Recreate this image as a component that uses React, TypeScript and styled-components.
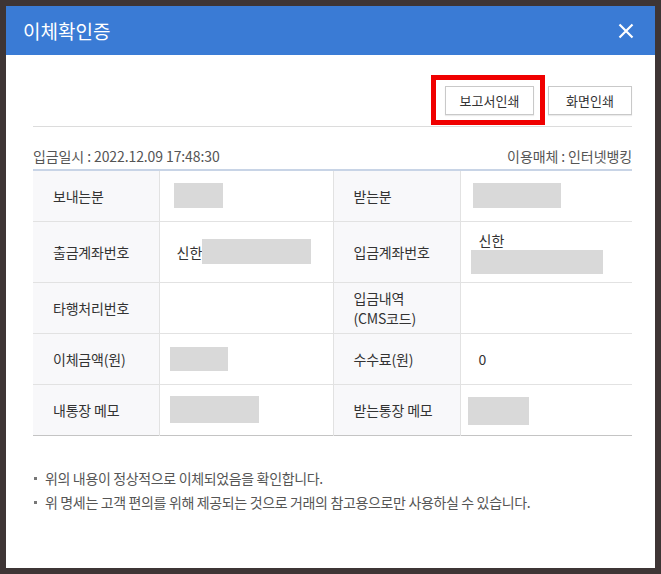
import React from "react";
import styled, { createGlobalStyle } from "styled-components";

const Global = createGlobalStyle`
  html, body { margin: 0; padding: 0; }
  body {
    background: #3e3535;
    font-family: "Noto Sans CJK KR", "Noto Sans", sans-serif;
    width: 661px;
    height: 574px;
    overflow: hidden;
  }
  * { box-sizing: border-box; }
`;

const Frame = styled.div`
  padding: 6px;
  width: 661px;
  height: 574px;
`;

const Modal = styled.div`
  width: 649px;
  height: 562px;
  background: #fff;
  display: flex;
  flex-direction: column;
`;

const Header = styled.div`
  height: 49px;
  background: #3a7bd5;
  display: flex;
  align-items: center;
  justify-content: space-between;
  padding: 0 20px 0 17px;
`;

const Title = styled.h1`
  margin: 0;
  font-size: 19px;
  font-weight: 400;
  color: #fff;
`;

const CloseBtn = styled.button`
  border: 0;
  background: none;
  padding: 0;
  width: 18px;
  height: 18px;
  display: flex;
  align-items: center;
  justify-content: center;
  cursor: pointer;
`;

const Body = styled.div`
  padding: 31px 23px 0 27px;
  display: flex;
  flex-direction: column;
`;

const Toolbar = styled.div`
  display: flex;
  justify-content: flex-end;
  gap: 14px;
  padding-bottom: 11px;
  border-bottom: 1px solid #dcdcdc;
`;

const Highlight = styled.div`
  position: relative;
  display: flex;
`;

const RedBox = styled.span`
  position: absolute;
  left: -14px;
  right: -11px;
  top: -11px;
  bottom: -10px;
  border: 5px solid #f00000;
  pointer-events: none;
`;

const PrintButton = styled.button<{ $w: number }>`
  width: ${(p) => p.$w}px;
  height: 29px;
  border: 1px solid #c9c9c9;
  background: #fff;
  font-family: inherit;
  font-size: 13px;
  color: #333;
  padding: 0;
  box-shadow: 0 1px 1px rgba(0, 0, 0, 0.08);
`;

const InfoLine = styled.div`
  display: flex;
  justify-content: space-between;
  align-items: center;
  margin-top: 18px;
  height: 22px;
  font-size: 14px;
  color: #555;
  letter-spacing: -0.1px;
`;

const Table = styled.table`
  margin-top: 2px;
  width: 599px;
  border-collapse: collapse;
  table-layout: fixed;
  border-top: 2px solid #c8d4e6;
  border-bottom: 1px solid #c4c4c4;
`;

const Row = styled.tr<{ $h?: number }>`
  height: ${(p) => p.$h ?? 51}px;
  border-bottom: 1px solid #e2e2e2;
  &:last-child { border-bottom: 0; }
`;

const Label = styled.th`
  background: #f8f8fa;
  text-align: left;
  font-weight: 400;
  font-size: 14px;
  color: #333;
  padding: 0 10px 0 20px;
  border-right: 1px solid #e2e2e2;
  line-height: 20px;
  letter-spacing: -0.2px;
`;

const Value = styled.td<{ $pad?: number; $top?: boolean }>`
  font-size: 14px;
  color: #333;
  padding: ${(p) => (p.$top ? "6px" : "0")} 8px 0 ${(p) => p.$pad ?? 10}px;
  border-right: 1px solid #e2e2e2;
  vertical-align: ${(p) => (p.$top ? "top" : "middle")};
  &:last-child { border-right: 0; }
`;

const Masked = styled.span<{ $w: number; $h?: number; $block?: boolean; $dy?: number }>`
  display: ${(p) => (p.$block ? "block" : "inline-block")};
  width: ${(p) => p.$w}px;
  height: ${(p) => p.$h ?? 25}px;
  background: #d9d9d9;
  vertical-align: middle;
  position: relative;
  top: ${(p) => p.$dy ?? 0}px;
`;

const BankName = styled.span<{ $indent?: number }>`
  vertical-align: middle;
  display: inline-block;
  padding-left: ${(p) => p.$indent ?? 0}px;
  line-height: 20px;
`;

const Notes = styled.ul`
  list-style: none;
  margin: 33px 0 0;
  padding: 0;
  display: flex;
  flex-direction: column;
  gap: 5px;
`;

const Note = styled.li`
  position: relative;
  padding-left: 12px;
  font-size: 14px;
  color: #555;
  line-height: 19px;
  letter-spacing: -0.35px;
  &::before {
    content: "";
    position: absolute;
    left: 1px;
    top: 8px;
    width: 3px;
    height: 3px;
    background: #777;
  }
`;

export default function App() {
  return (
    <Frame>
      <Global />
      <Modal>
        <Header>
          <Title>이체확인증</Title>
          <CloseBtn aria-label="닫기">
            <svg width="16" height="16" viewBox="0 0 16 16">
              <path d="M1.5 1.5L14.5 14.5M14.5 1.5L1.5 14.5" stroke="#fff" strokeWidth="2.2" />
            </svg>
          </CloseBtn>
        </Header>
        <Body>
          <Toolbar>
            <Highlight>
              <PrintButton $w={89}>보고서인쇄</PrintButton>
              <RedBox />
            </Highlight>
            <PrintButton $w={84}>화면인쇄</PrintButton>
          </Toolbar>
          <InfoLine>
            <span>입금일시 : 2022.12.09 17:48:30</span>
            <span>이용매체 : 인터넷뱅킹</span>
          </InfoLine>
          <Table>
            <colgroup>
              <col style={{ width: 126 }} />
              <col style={{ width: 174 }} />
              <col style={{ width: 127 }} />
              <col style={{ width: 172 }} />
            </colgroup>
            <tbody>
              <Row>
                <Label>보내는분</Label>
                <Value $pad={14}>
                  <Masked $w={49} />
                </Value>
                <Label>받는분</Label>
                <Value $pad={12}>
                  <Masked $w={88} />
                </Value>
              </Row>
              <Row $h={61}>
                <Label>출금계좌번호</Label>
                <Value $pad={17}>
                  <BankName>신한</BankName>
                  <Masked $w={109} />
                </Value>
                <Label>입금계좌번호</Label>
                <Value $pad={10} $top>
                  <BankName $indent={8}>신한</BankName>
                  <Masked $w={132} $h={24} $block />
                </Value>
              </Row>
              <Row>
                <Label>타행처리번호</Label>
                <Value />
                <Label>
                  입금내역
                  <br />
                  (CMS코드)
                </Label>
                <Value />
              </Row>
              <Row>
                <Label>이체금액(원)</Label>
                <Value $pad={10}>
                  <Masked $w={58} $h={24} />
                </Value>
                <Label>수수료(원)</Label>
                <Value $pad={18}>0</Value>
              </Row>
              <Row>
                <Label>내통장 메모</Label>
                <Value $pad={10}>
                  <Masked $w={89} $h={27} />
                </Value>
                <Label>받는통장 메모</Label>
                <Value $pad={7}>
                  <Masked $w={61} $h={28} $dy={1} />
                </Value>
              </Row>
            </tbody>
          </Table>
          <Notes>
            <Note>위의 내용이 정상적으로 이체되었음을 확인합니다.</Note>
            <Note>위 명세는 고객 편의를 위해 제공되는 것으로 거래의 참고용으로만 사용하실 수 있습니다.</Note>
          </Notes>
        </Body>
      </Modal>
    </Frame>
  );
}
